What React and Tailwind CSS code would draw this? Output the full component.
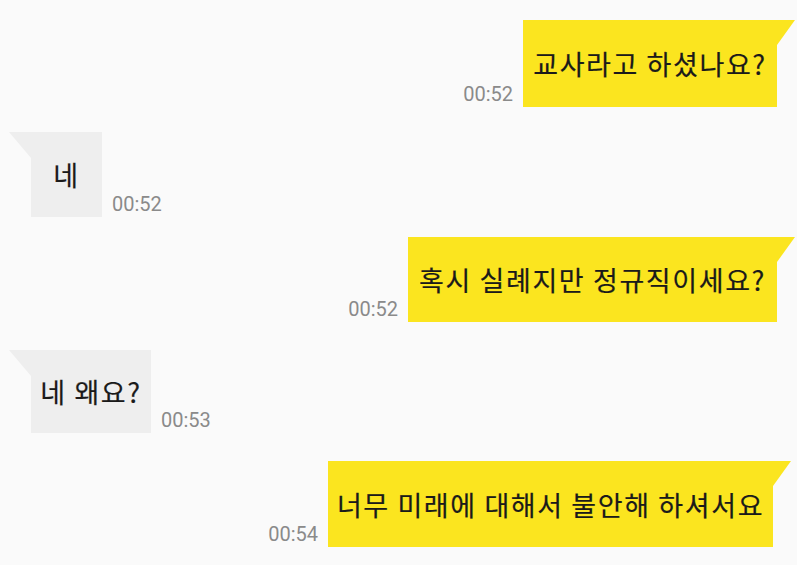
import React from "react";

const KR = { fontFamily: '"Noto Sans CJK KR", "Noto Sans", sans-serif' };
const TIME = { fontFamily: 'Roboto, "Liberation Sans", sans-serif' };

function Time({ t }) {
  return (
    <span className="text-[20px] leading-none text-[#8a8a8a] mb-[3px] whitespace-nowrap" style={TIME}>
      {t}
    </span>
  );
}

function Mine({ text, time, w, h, mt, pr }) {
  return (
    <div className={`flex justify-end items-end gap-[10px] ${mt} ${pr}`}>
      <Time t={time} />
      <div className={`relative bg-[#fbe51f] flex items-center justify-center ${w} ${h}`}>
        <span className="text-[27px] tracking-[1.6px] leading-none text-[#1a1a1a] whitespace-nowrap [-webkit-text-stroke:0.2px_#1a1a1a]" style={KR}>
          {text}
        </span>
        <svg className="absolute left-full top-0" width="18" height="25" viewBox="0 0 18 25">
          <polygon points="0,0 18,0 0,25" fill="#fbe51f" />
        </svg>
      </div>
    </div>
  );
}

function Theirs({ text, time, w, h, mt }) {
  return (
    <div className={`flex justify-start items-end gap-[10px] pl-[31px] ${mt}`}>
      <div className={`relative bg-[#eeeeee] flex items-center justify-center ${w} ${h}`}>
        <span className="text-[27px] tracking-[1.6px] leading-none text-[#1a1a1a] whitespace-nowrap [-webkit-text-stroke:0.2px_#1a1a1a]" style={KR}>
          {text}
        </span>
        <svg className="absolute right-full top-0" width="22" height="26" viewBox="0 0 22 26">
          <polygon points="0,0 22,0 22,26" fill="#eeeeee" />
        </svg>
      </div>
      <Time t={time} />
    </div>
  );
}

export default function App() {
  return (
    <div className="w-[797px] h-[565px] bg-[#fafafa] overflow-hidden flex flex-col">
      <Mine text="교사라고 하셨나요?" time="00:52" w="w-[254px]" h="h-[87px]" mt="mt-[20px]" pr="pr-[20px]" />
      <Theirs text="네" time="00:52" w="w-[71px]" h="h-[85px]" mt="mt-[25px]" />
      <Mine text="혹시 실례지만 정규직이세요?" time="00:52" w="w-[369px]" h="h-[85px]" mt="mt-[20px]" pr="pr-[20px]" />
      <Theirs text="네 왜요?" time="00:53" w="w-[120px]" h="h-[83px]" mt="mt-[28px]" />
      <Mine text="너무 미래에 대해서 불안해 하셔서요" time="00:54" w="w-[445px]" h="h-[86px]" mt="mt-[28px]" pr="pr-[24px]" />
    </div>
  );
}
